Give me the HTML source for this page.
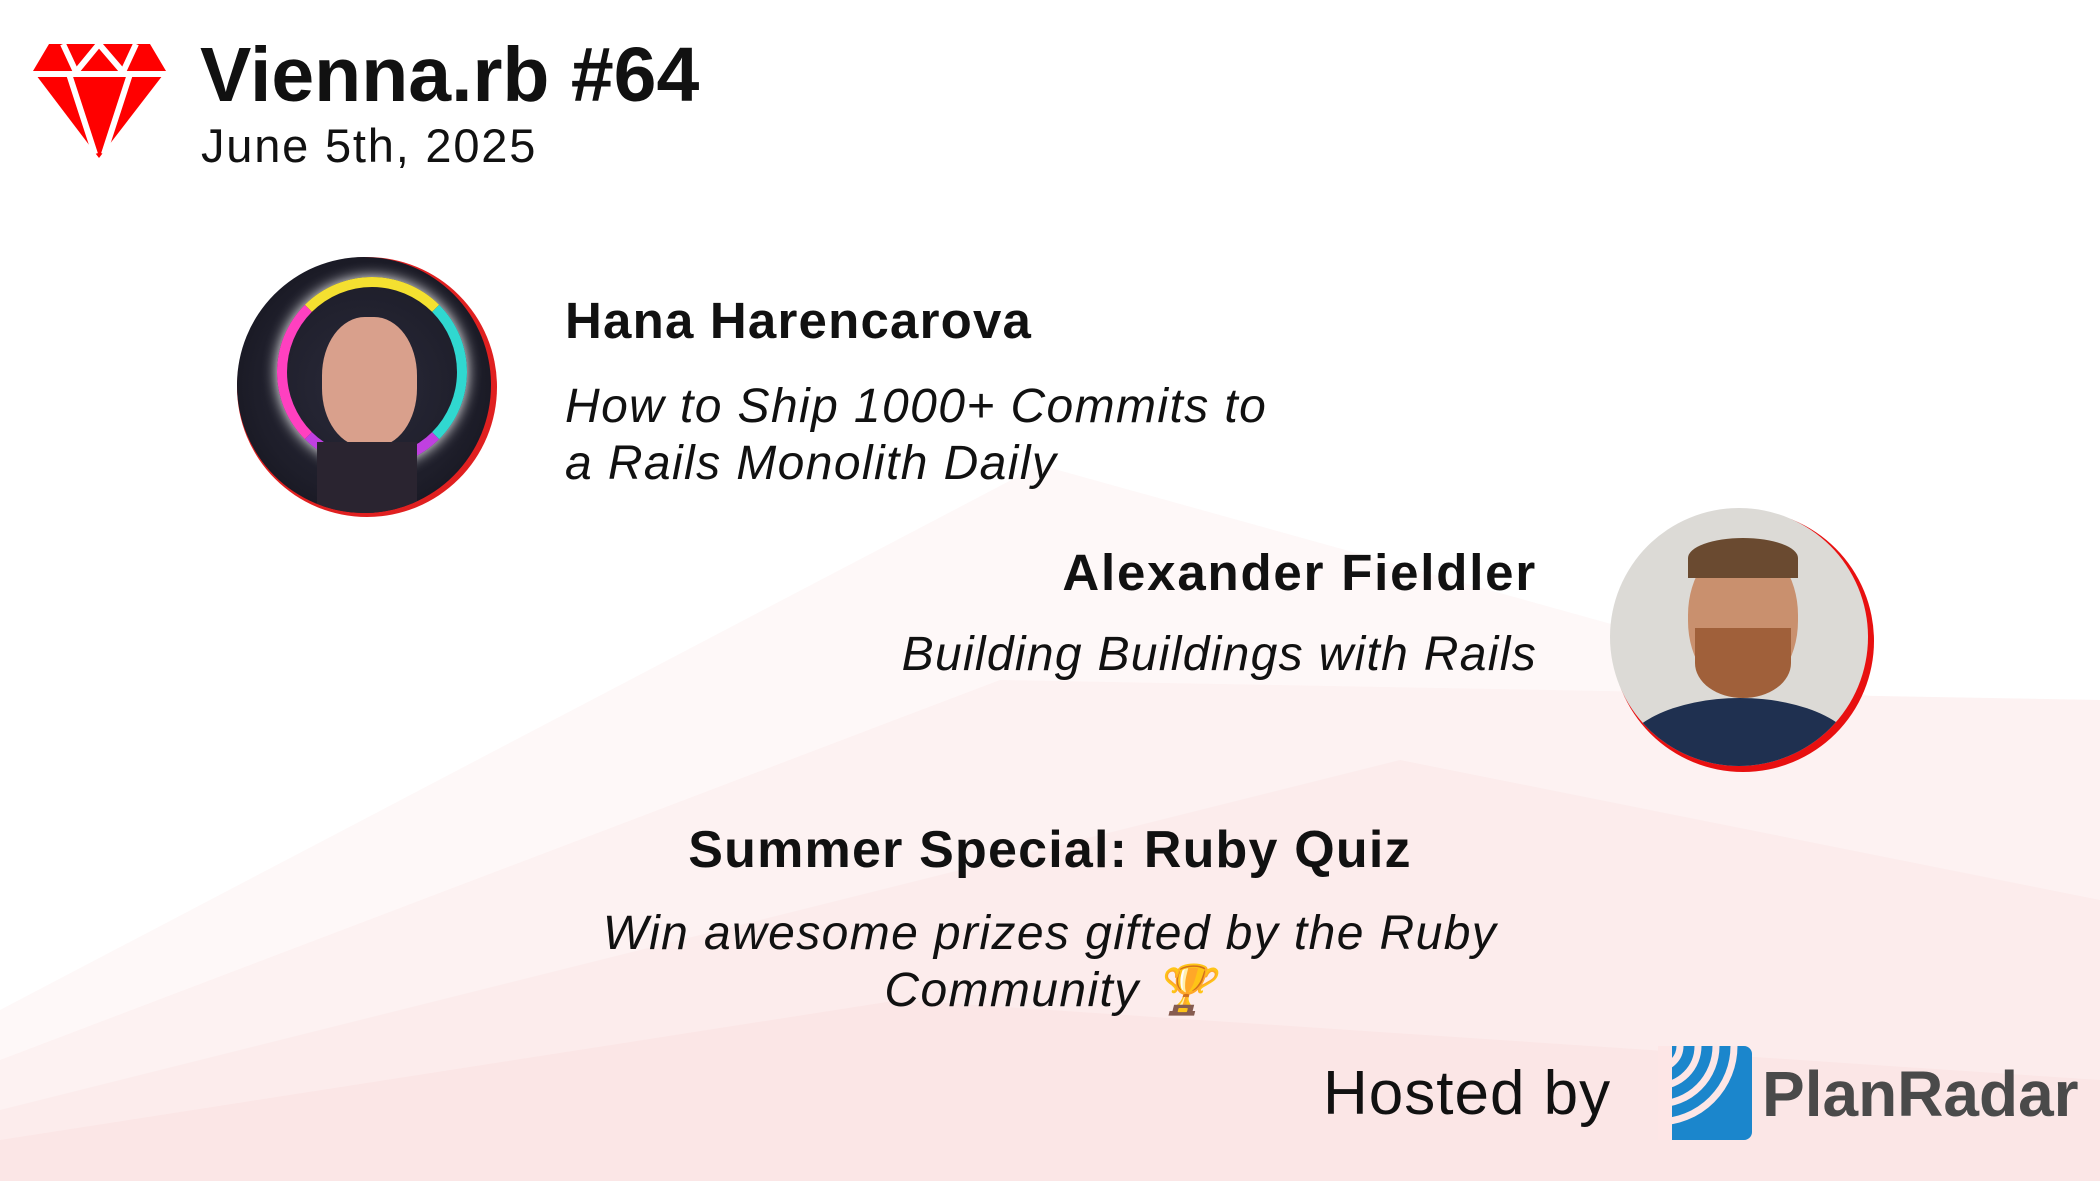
<!DOCTYPE html>
<html><head><meta charset="utf-8"><style>
html,body{margin:0;padding:0}
body{width:2100px;height:1181px;position:relative;overflow:hidden;background:#fff;font-family:"Liberation Sans","DejaVu Sans",sans-serif;color:#111}
.t{position:absolute;white-space:nowrap;line-height:1}
.b{font-weight:bold}
.i{font-style:italic}
</style></head><body>
<svg style="position:absolute;left:0;top:0" width="2100" height="1181">
<polygon points="0,1181 0,1010 1040,465 2100,760 2100,1181" fill="#fef8f8"/>
<polygon points="0,1181 0,1060 1000,680 2100,700 2100,1181" fill="#fdf2f2"/>
<polygon points="0,1181 0,1110 1400,760 2100,900 2100,1181" fill="#fcecec"/>
<polygon points="0,1181 0,1140 900,1000 2100,1080 2100,1181" fill="#fbe6e6"/>
</svg>
<svg style="position:absolute;left:33px;top:44px" width="133" height="114" viewBox="0 0 133 114">
<polygon points="16,0 117,0 133,27 66,114 0,27" fill="#f00"/>
<g stroke="#fff" stroke-width="6" fill="none">
<line x1="0" y1="30" x2="133" y2="30"/>
<line x1="30" y1="0" x2="43" y2="28"/>
<line x1="103" y1="0" x2="90" y2="28"/>
<line x1="43" y1="28" x2="66" y2="0"/>
<line x1="90" y1="28" x2="66" y2="0"/>
<line x1="36" y1="30" x2="62" y2="110"/>
<line x1="97" y1="30" x2="71" y2="110"/>
</g>
</svg>
<div class="t b" style="left:200px;top:37px;font-size:77px">Vienna.rb #64</div>
<div class="t" style="left:201px;top:122px;font-size:47px;letter-spacing:1.8px">June 5th, 2025</div>

<div style="position:absolute;left:237px;top:257px;width:260px;height:260px;border-radius:50%;background:#e02020"></div>
<div style="position:absolute;left:237px;top:257px;width:254px;height:256px;border-radius:50%;overflow:hidden;background:radial-gradient(circle at 50% 50%,#2a2a3a 0,#1e1e2a 60%,#101018 100%)">
<div style="position:absolute;left:85px;top:60px;width:95px;height:130px;border-radius:45%;background:#d9a08c"></div>
<div style="position:absolute;left:40px;top:20px;width:170px;height:170px;border-radius:50%;border:10px solid transparent;border-color:#f4e030 #30d8d0 #c040e0 #ff40c0;box-shadow:0 0 14px #fff"></div>
<div style="position:absolute;left:80px;top:185px;width:100px;height:80px;background:#2a2430"></div>
</div>
<div class="t b" style="left:565px;top:295px;font-size:51px;letter-spacing:1.2px">Hana Harencarova</div>
<div class="t i" style="left:565px;top:378px;font-size:48px;line-height:57px;letter-spacing:1.4px">How to Ship 1000+ Commits to<br>a Rails Monolith Daily</div>

<div class="t b" style="right:563px;top:547px;font-size:51px;letter-spacing:1.8px">Alexander Fieldler</div>
<div class="t i" style="right:563px;top:631px;font-size:48px;letter-spacing:1.3px">Building Buildings with Rails</div>
<div style="position:absolute;left:1612px;top:510px;width:262px;height:262px;border-radius:50%;background:#e81010"></div>
<div style="position:absolute;left:1610px;top:508px;width:258px;height:258px;border-radius:50%;overflow:hidden;background:#dcdad6">
<div style="position:absolute;left:78px;top:35px;width:110px;height:150px;border-radius:48%;background:#c9906e"></div>
<div style="position:absolute;left:78px;top:30px;width:110px;height:40px;border-radius:50% 50% 0 0;background:#6a4a30"></div>
<div style="position:absolute;left:85px;top:120px;width:96px;height:70px;border-radius:0 0 50% 50%;background:#a0603a"></div>
<div style="position:absolute;left:10px;top:190px;width:240px;height:120px;border-radius:50% 50% 0 0;background:#1f3050"></div>
</div>

<div class="t b" style="left:0;width:2100px;text-align:center;top:824px;font-size:52px;letter-spacing:1.2px">Summer Special: Ruby Quiz</div>
<div class="t i" style="left:0;width:2100px;text-align:center;top:905px;font-size:48px;line-height:57px;white-space:normal;letter-spacing:1.4px">Win awesome prizes gifted by the Ruby<br>Community 🏆</div>

<div class="t" style="left:1323px;top:1063px;font-size:62px;letter-spacing:1px">Hosted by</div>
<svg style="position:absolute;left:1658px;top:1046px" width="94" height="94" viewBox="0 0 94 94">
<rect x="0" y="0" width="94" height="94" rx="8" fill="#1b86cc"/>
<g fill="none" stroke="#fde6e6" stroke-width="7">
<circle cx="0" cy="0" r="22"/><circle cx="0" cy="0" r="40"/><circle cx="0" cy="0" r="58"/><circle cx="0" cy="0" r="76"/>
</g>
<rect x="0" y="0" width="14" height="94" fill="#fde6e6"/>
</svg>
<div class="t b" style="left:1762px;top:1062px;font-size:64px;color:#4a4a4a;letter-spacing:0px">PlanRadar</div>
</body></html>
